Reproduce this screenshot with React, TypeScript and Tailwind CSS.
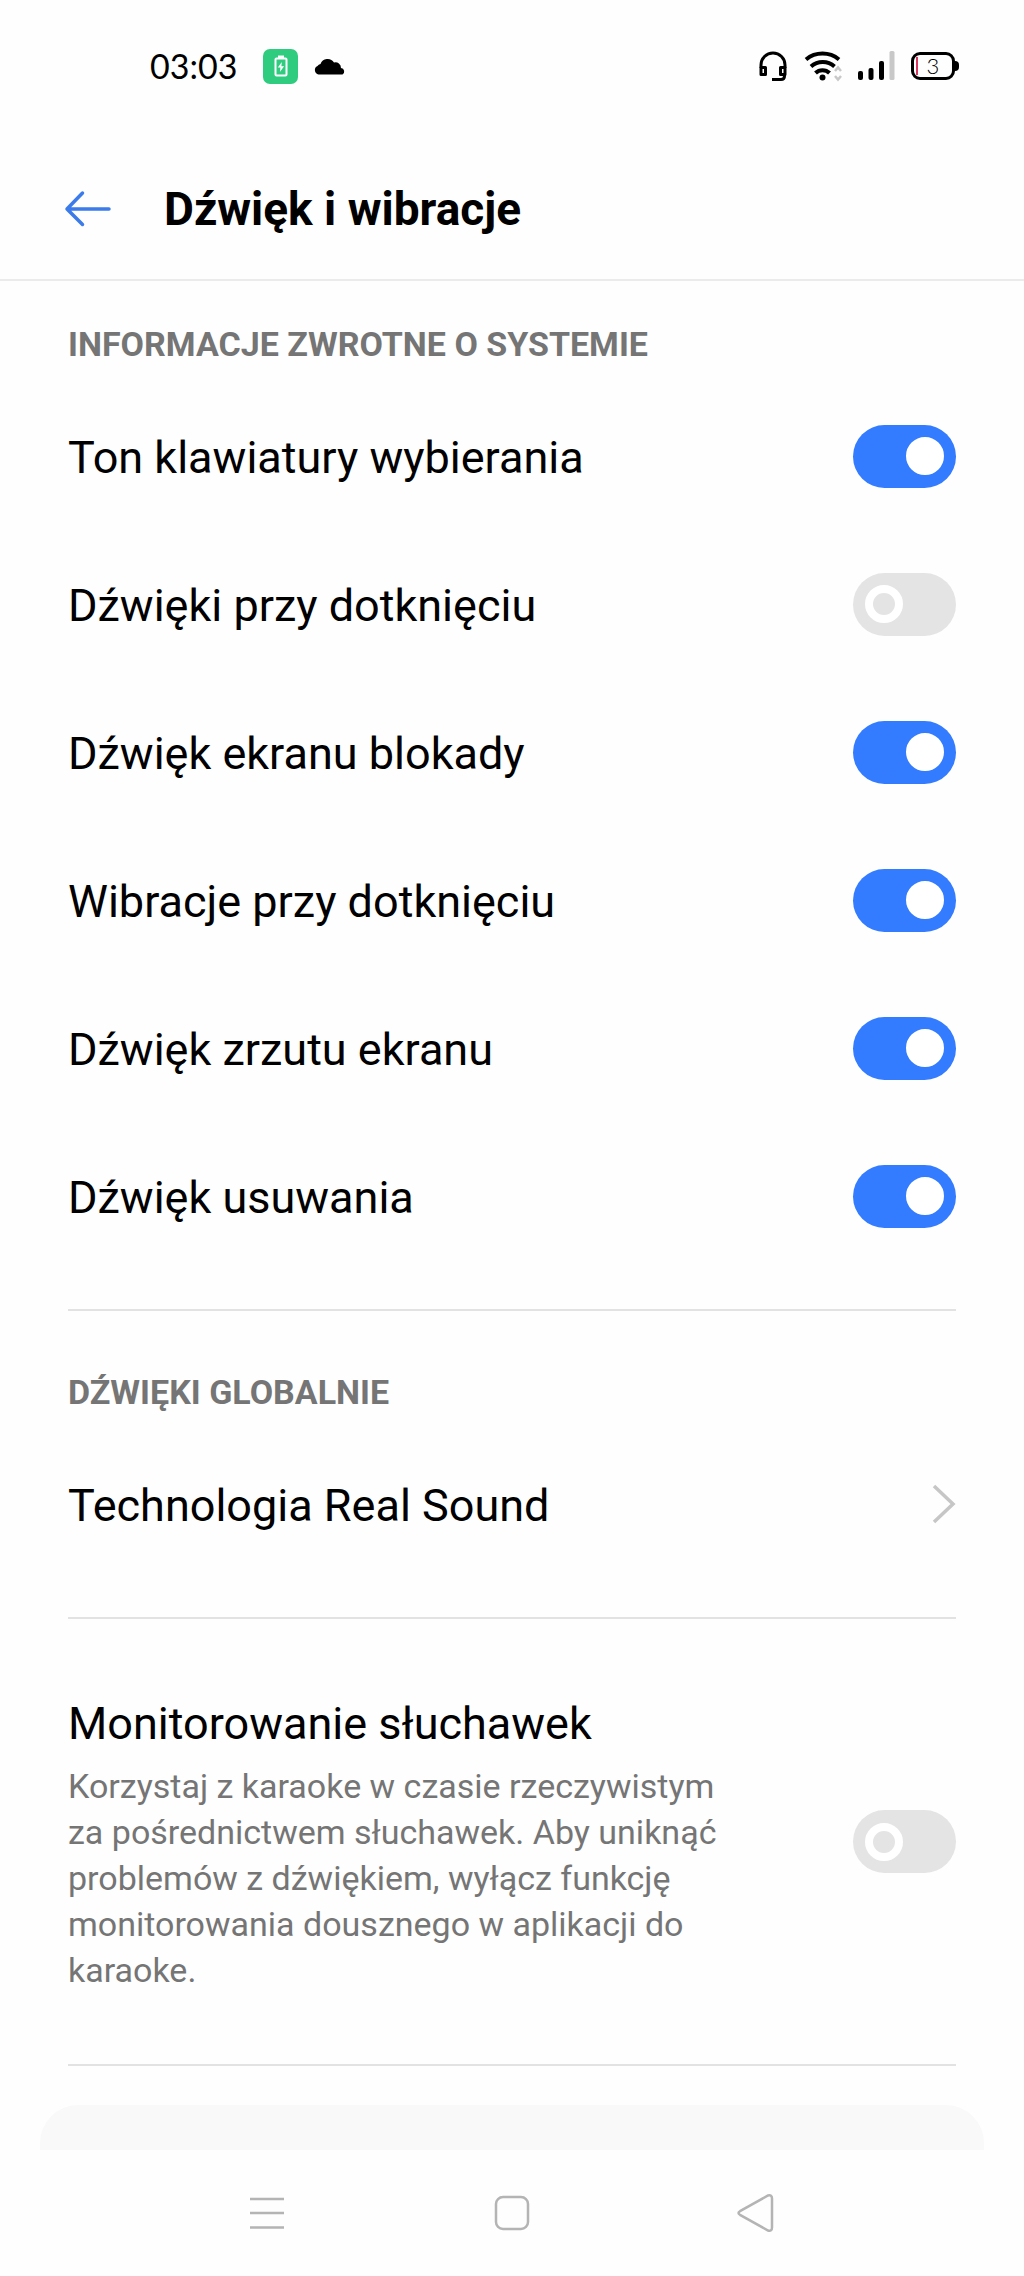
import { useId } from "react";

const feedbackSettings = [
  { title: "Ton klawiatury wybierania", enabled: true },
  { title: "Dźwięki przy dotknięciu", enabled: false },
  { title: "Dźwięk ekranu blokady", enabled: true },
  { title: "Wibracje przy dotknięciu", enabled: true },
  { title: "Dźwięk zrzutu ekranu", enabled: true },
  { title: "Dźwięk usuwania", enabled: true },
];

function StatusBar() {
  return (
    <div className="flex h-[132px] items-center justify-between pl-[150px] pr-[65px]">
      <div className="flex items-center">
        <span className="font-['Lato',sans-serif] text-[34px] leading-10">03:03</span>
        <svg className="ml-[26px]" width="35" height="35" viewBox="0 0 35 35">
          <rect width="35" height="35" rx="7" fill="#2fcc7f" />
          <rect x="12.5" y="9.5" width="11" height="17" rx="1" fill="none" stroke="#fff" strokeWidth="2" />
          <path d="M15 6.5h6v3h-6z" fill="#fff" />
          <path d="M18.8 13l-4 5.6h2.6l-.5 4.4 4.2-5.8h-2.7z" fill="#fff" />
        </svg>
        <svg className="ml-4" width="32" height="20" viewBox="0 0 32 20">
          <path
            d="M4.500 18.500A4.500 4.500 0 0 1 3.500 10q1-1.500 3-2A7.500 7.500 0 0 1 20 6.500a5.500 5.500 0 0 1 7 5.500 3.500 3.500 0 0 1 1.500 6.500z"
            fill="#000"
          />
        </svg>
      </div>
      <div className="flex items-center">
        <svg width="30" height="32" viewBox="0 0 30 32" fill="none" stroke="#000" strokeWidth="3">
          <path d="M3 18v-3a12 12 0 0 1 24 0v3M26.500 23v3q0 3.500-3.500 3.500H14" />
          <path d="M3 17.500h4.500v7H3zM22.500 17.500H27v7h-4.500z" strokeLinejoin="round" />
        </svg>
        <svg className="ml-4" width="40" height="32" viewBox="0 0 40 32" fill="none">
          <g stroke="#000" strokeWidth="4">
            <path d="M2 9.500a26 26 0 0 1 33 0" />
            <path d="M7 16.500a17.500 17.500 0 0 1 23.500 0" />
            <path d="M11.500 23a10 10 0 0 1 14 0" />
          </g>
          <circle cx="18.500" cy="27.500" r="3" fill="#000" />
          <path d="M31 21l3-3.500 3 3.500M31 26l3 3.500 3-3.500" stroke="#c8c8c8" strokeWidth="2.500" />
        </svg>
        <svg className="ml-[14px]" width="37" height="32" viewBox="0 0 37 32">
          <rect x="0" y="21" width="5" height="9" rx="2" />
          <rect x="10.500" y="18" width="5" height="12" rx="2" />
          <rect x="21" y="11" width="5" height="19" rx="2" />
          <rect x="31.500" y="1" width="5" height="29" rx="1.500" fill="#c8c8c8" />
        </svg>
        <div className="ml-4 flex items-center">
          <div className="relative flex h-7 w-[44px] items-center justify-center rounded-[9px] border-[3px] border-black">
            <span className="absolute inset-y-[2px] left-[2px] w-[2px] bg-[#d8365f]" />
            <span className="font-['Lato',sans-serif] text-[22px] font-light leading-5">3</span>
          </div>
          <span className="h-[10px] w-[4px] rounded-r-full bg-black" />
        </div>
      </div>
    </div>
  );
}

function Toggle({ id, enabled }: { id: string; enabled: boolean }) {
  return (
    <input
      id={id}
      type="checkbox"
      role="switch"
      defaultChecked={enabled}
      className="flex h-[63px] w-[103px] shrink-0 cursor-pointer appearance-none items-center rounded-full bg-[#e4e4e4] px-3 before:size-[38px] before:rounded-full before:border-8 before:border-white before:content-[''] checked:justify-end checked:bg-[#337bff] checked:before:bg-white"
    />
  );
}

function ToggleRow({ title, enabled }: { title: string; enabled: boolean }) {
  const id = useId();
  return (
    <div className="flex h-[148px] items-center justify-between">
      <label htmlFor={id} className="pt-1 text-[45px] leading-[54px]">
        {title}
      </label>
      <Toggle id={id} enabled={enabled} />
    </div>
  );
}

function SectionTitle({ children }: { children: string }) {
  return (
    <h2 className="text-[34px] font-bold uppercase leading-10 text-[#757575]">
      {children}
    </h2>
  );
}

function NavigationBar() {
  return (
    <nav className="grid h-[126px] grid-cols-3 items-center px-36">
      <button aria-label="Ostatnie aplikacje" className="flex justify-center">
        <svg width="40" height="40" viewBox="0 0 40 40" stroke="#b4b4b4" strokeWidth="2.500">
          <path d="M3 6h34M3 20h34M3 34.500h34" />
        </svg>
      </button>
      <button aria-label="Ekran główny" className="flex justify-center">
        <svg width="40" height="40" viewBox="0 0 40 40" fill="none" stroke="#b4b4b4" strokeWidth="2.500">
          <rect x="4" y="4" width="32" height="32" rx="7" />
        </svg>
      </button>
      <button aria-label="Wstecz" className="flex justify-center">
        <svg width="40" height="40" viewBox="0 0 40 40" fill="none" stroke="#b4b4b4" strokeWidth="2.500">
          <path d="M3 18.200L31 2.500Q35 1.500 35 5.500v29q0 4-4 3L3 21.800q-3-1.800 0-3.600z" />
        </svg>
      </button>
    </nav>
  );
}

function App() {
  const monitorId = useId();
  return (
    <div className="min-h-screen bg-[#fefefe] font-['Roboto',sans-serif] text-black">
      <StatusBar />
      <header className="flex h-[149px] items-center border-b-2 border-[#ebebeb] pl-16 pt-[6px]">
        <button aria-label="Wróć">
          <svg width="48" height="40" viewBox="0 0 48 40" fill="none" stroke="#3b7bea" strokeWidth="3.500" strokeLinecap="round" strokeLinejoin="round">
            <path d="M18.500 4L3 20l15.500 15.500M3 20h42" />
          </svg>
        </button>
        <h1 className="ml-[52px] text-[46px] font-bold leading-[54px]">Dźwięk i wibracje</h1>
      </header>

      <main>
        <div className="px-[68px]">
          <section className="border-b-2 border-[#e2e2e2] pb-[39px] pt-[43px]">
            <SectionTitle>Informacje zwrotne o systemie</SectionTitle>
            <div className="mt-[18px]">
              {feedbackSettings.map((item) => (
                <ToggleRow key={item.title} title={item.title} enabled={item.enabled} />
              ))}
            </div>
          </section>

          <section className="border-b-2 border-[#e2e2e2] pb-[39px] pt-[61px]">
            <SectionTitle>Dźwięki globalnie</SectionTitle>
            <a href="#real-sound" className="mt-[18px] flex h-[148px] items-center justify-between">
              <span className="pt-1 text-[45px] leading-[54px]">Technologia Real Sound</span>
              <svg width="24" height="40" viewBox="0 0 24 40" fill="none" stroke="#c6c6c6" strokeWidth="3.500">
                <path d="M2 2l19 18L2 38" />
              </svg>
            </a>
          </section>

          <section className="flex items-center justify-between border-b-2 border-[#e2e2e2] py-[71px]">
            <div className="max-w-[680px] pt-[7px]">
              <label htmlFor={monitorId} className="block text-[45px] leading-[54px]">
                Monitorowanie słuchawek
              </label>
              <p className="mt-3 text-[34px] leading-[46px] text-[#757575]">
                Korzystaj z karaoke w czasie rzeczywistym za pośrednictwem słuchawek. Aby uniknąć problemów z
                dźwiękiem, wyłącz funkcję monitorowania dousznego w aplikacji do karaoke.
              </p>
            </div>
            <Toggle id={monitorId} enabled={false} />
          </section>
        </div>
        <div className="mx-10 mt-[39px] h-[45px] rounded-t-[38px] bg-[#f9f9f9]" />
      </main>

      <NavigationBar />
    </div>
  );
}

export default App;
